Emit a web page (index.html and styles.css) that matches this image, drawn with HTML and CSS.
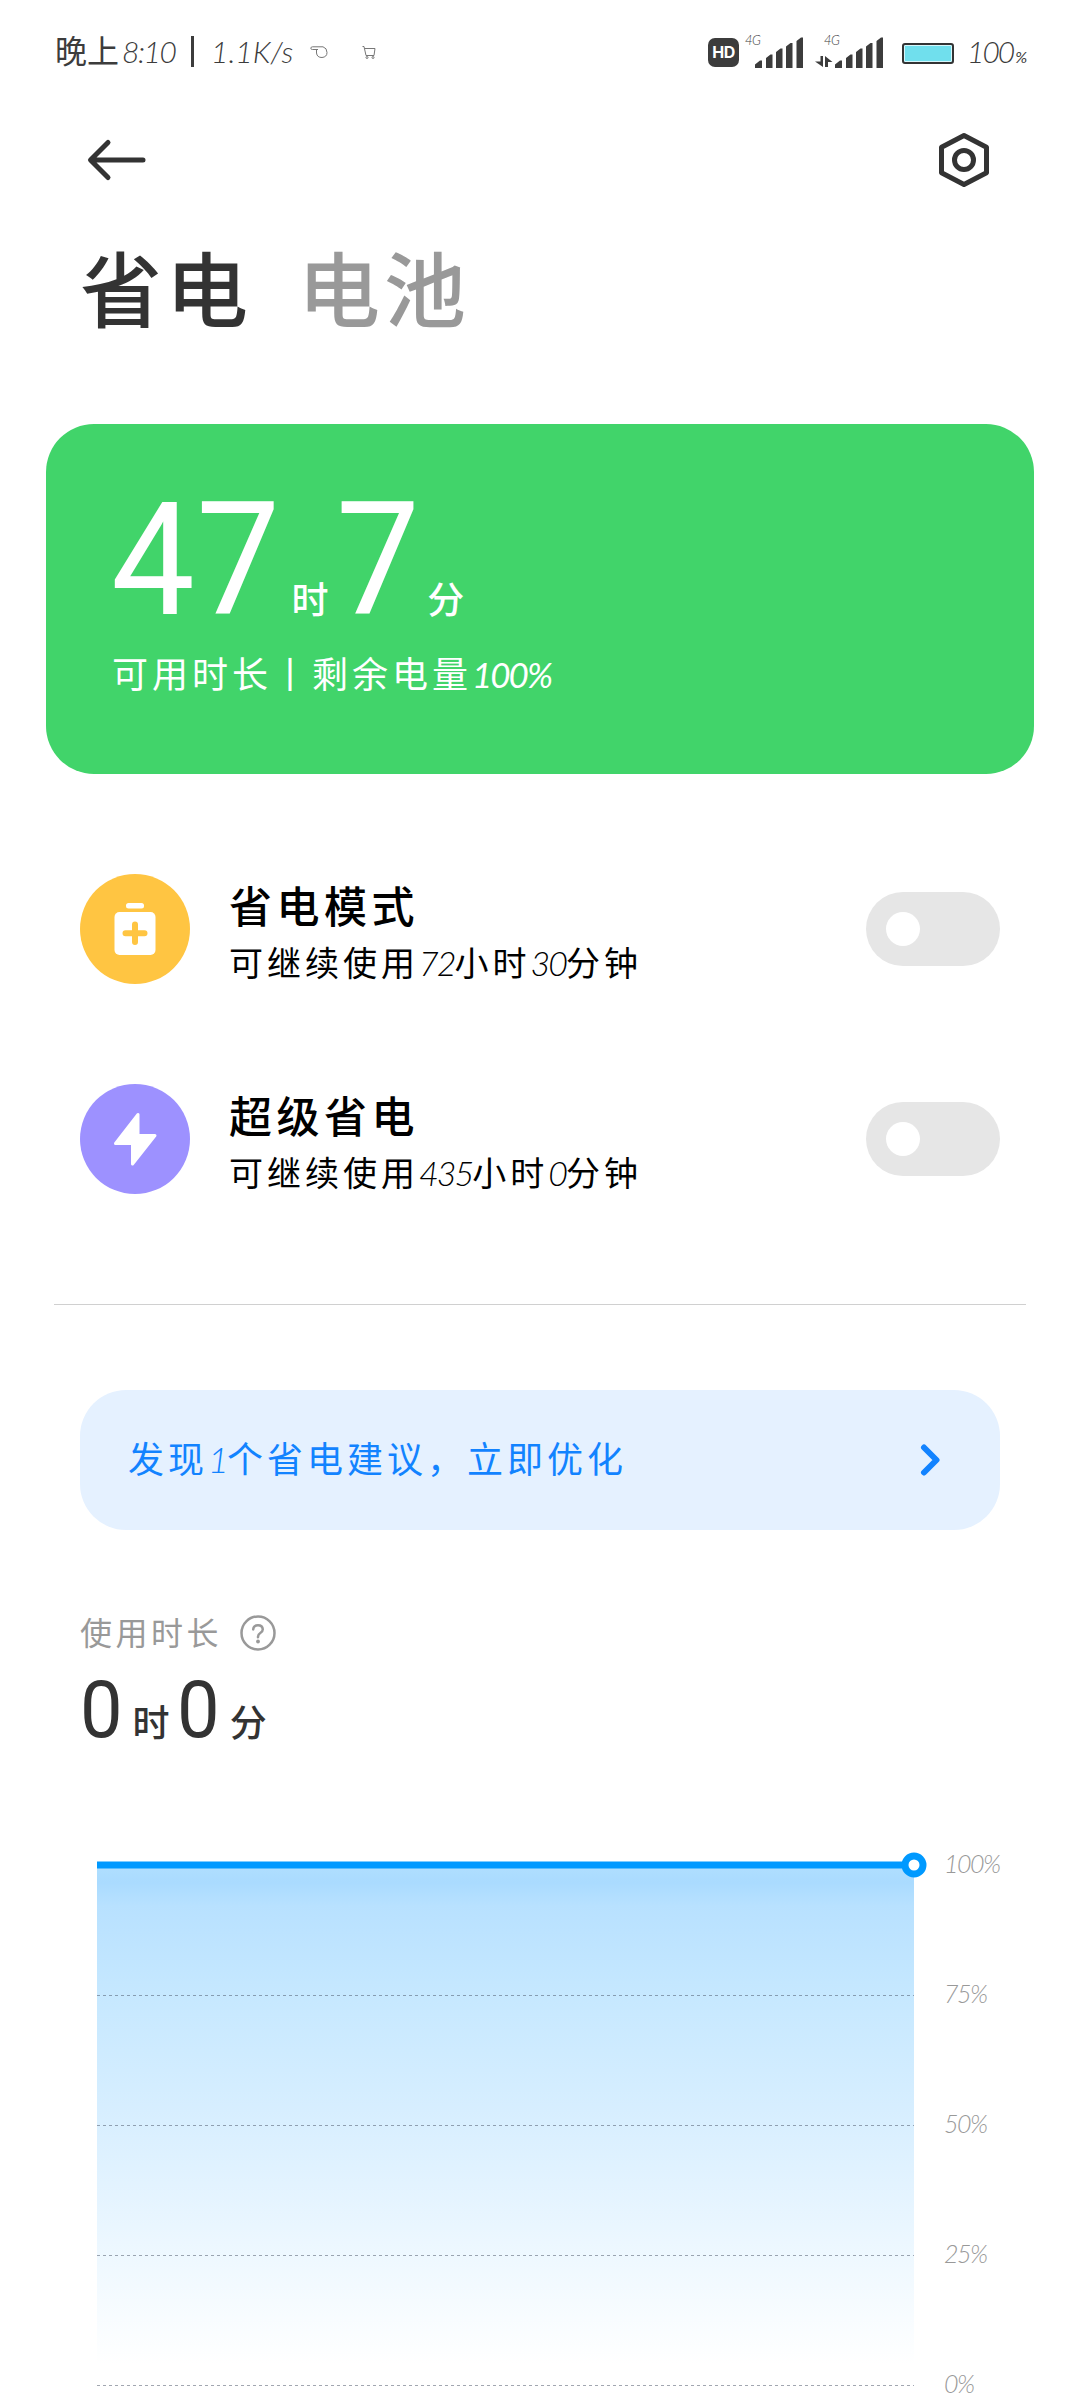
FILE: index.html
```html
<!DOCTYPE html>
<html lang="zh-CN">
<head>
<meta charset="utf-8">
<title>省电</title>
<link rel="stylesheet" href="styles.css">
</head>
<body>
<div class="screen">
  <header class="status">
    <div class="status-left">
      <span class="clock">晚上<span class="num">8:10</span></span>
      <span class="sep"></span>
      <span class="num speed">1.1K/s</span>
      <svg class="tray-hand" width="18" height="14" viewBox="0 0 18 14"><path d="M8 4.500H2.500Q.8 4.500.8 3.200T2.500 1.800H13Q17 3 17 7.500T12 12.500Q7 12.500 6.500 8V4.500" /></svg>
      <svg class="tray-cart" width="14" height="14" viewBox="0 0 14 14"><path d="M.5 1.500H2L4 10.500H12L13 3.500H2.800" /><circle cx="5" cy="12.500" r="1"/><circle cx="11" cy="12.500" r="1"/></svg>
    </div>
    <div class="status-right">
      <span class="hd">HD</span>
      <span class="signal first"><span class="net">4G</span>
        <svg width="48" height="31" viewBox="0 0 48 31"><path d="M0 31V27.500L5 23.500H7V31ZM11 31V21L15.500 17.500H17.500V31ZM21 31V15L25.500 11.500H27.500V31ZM31 31V9.500L35.500 6H37.500V31ZM41.500 31V4L46 .5H48V31Z"/></svg>
      </span>
      <span class="signal second"><span class="net">4G</span>
        <svg width="68" height="31" viewBox="0 0 68 31"><path d="M5.500 19H8V30L0 24.500H5.500ZM10 19 17.500 25H13V30H10Z"/><path transform="translate(20)" d="M0 31V27.500L5 23.500H7V31ZM11 31V21L15.500 17.500H17.500V31ZM21 31V15L25.500 11.500H27.500V31ZM31 31V9.500L35.500 6H37.500V31ZM41.500 31V4L46 .5H48V31Z"/></svg>
      </span>
      <span class="battery"></span>
      <span class="num level">100<small>%</small></span>
    </div>
  </header>

  <nav class="toolbar">
    <svg width="60" height="44" viewBox="0 0 60 44"><path d="M57 22H5M22 4.500 4.500 22 22 39.500"/></svg>
    <svg width="54" height="58" viewBox="0 0 54 58"><path d="M27 4.500 49.500 16.200V41.800L27 53.500 4.500 41.800V16.200Z"/><circle cx="27" cy="29" r="9.500"/></svg>
  </nav>

  <div class="tabs"><span class="tab active">省电</span><span class="tab">电池</span></div>

  <section class="summary">
    <div class="duration big"><span class="digits">47</span><span class="unit">时</span><span class="digits">7</span><span class="unit">分</span></div>
    <div class="caption">可用时长丨剩余电量<span class="num">100%</span></div>
  </section>

  <section class="modes">
    <div class="mode">
      <svg class="badge" width="110" height="110" viewBox="0 0 110 110"><circle cx="55" cy="55" r="55" fill="#ffc542"/><rect x="46" y="29" width="18" height="5.500" rx="2.500" fill="#fff"/><rect x="34.500" y="38" width="41" height="43" rx="5" fill="#fff"/><path d="M55 50.500V68M45.500 59.200H64.500" stroke="#ffc542" stroke-width="6" stroke-linecap="round"/></svg>
      <div class="mode-text">
        <div class="mode-title">省电模式</div>
        <div class="mode-sub">可继续使用<span class="num">72</span>小时<span class="num">30</span>分钟</div>
      </div>
      <span class="toggle"><span class="knob"></span></span>
    </div>
    <div class="mode">
      <svg class="badge" width="110" height="110" viewBox="0 0 110 110"><circle cx="55" cy="55" r="55" fill="#9d91ff"/><path d="M58 30.500V51.500H75L52.500 80V59.500H35.500Z" fill="#fff" stroke="#fff" stroke-width="3" stroke-linejoin="round"/></svg>
      <div class="mode-text">
        <div class="mode-title">超级省电</div>
        <div class="mode-sub">可继续使用<span class="num">435</span>小时<span class="num">0</span>分钟</div>
      </div>
      <span class="toggle"><span class="knob"></span></span>
    </div>
  </section>

  <hr class="divider">

  <section class="tip">
    <span class="tip-text">发现<span class="num">1</span>个省电建议，立即优化</span>
    <svg width="22" height="36" viewBox="0 0 22 36"><path d="M4 5.500 16.500 18 4 30.500"/></svg>
  </section>

  <section class="usage">
    <div class="usage-head"><span>使用时长</span>
      <svg width="36" height="36" viewBox="0 0 36 36"><circle cx="18" cy="18" r="16.500"/><path d="M13.200 14.500Q13.500 10.200 18 10.200T22.800 14.300Q22.800 16.500 20.300 18T18 22.300"/><circle class="dot" cx="18" cy="26.500" r="1.900"/></svg>
    </div>
    <div class="duration small"><span class="digits">0</span><span class="unit">时</span><span class="digits">0</span><span class="unit">分</span></div>
  </section>

  <section class="chart">
    <svg width="836" height="550" viewBox="0 0 836 550">
      <defs>
        <linearGradient id="fill" x1="0" y1="0" x2="0" y2="1">
          <stop offset="0" stop-color="#b0dfff"/><stop offset=".035" stop-color="#aadbff"/><stop offset=".08" stop-color="#b8e1ff"/><stop offset=".25" stop-color="#c6e8ff"/><stop offset=".5" stop-color="#d9efff"/><stop offset=".75" stop-color="#eef8ff"/><stop offset=".96" stop-color="#fff"/>
        </linearGradient>
      </defs>
      <rect x="0" y="14.500" width="817" height="521" fill="url(#fill)"/>
      <path class="grid" d="M0 145.500H817M0 275.500H817M0 405.500H817M0 535.500H817"/>
      <path class="line" d="M0 15H817"/>
      <circle class="marker" cx="817" cy="15" r="9"/>
    </svg>
    <div class="axis"><span class="num">100%</span><span class="num">75%</span><span class="num">50%</span><span class="num">25%</span><span class="num">0%</span></div>
  </section>
</div>
</body>
</html>
```
FILE: styles.css
```css
* { box-sizing: border-box; }
body {
  margin: 0;
  background: #fff;
  color: #333;
  font-family: "Noto Sans CJK SC", sans-serif;
}
.screen {
  width: 1080px;
  height: 2400px;
  overflow: hidden;
  display: flex;
  flex-direction: column;
}
svg { display: block; flex: none; fill: none; }
.num {
  font-family: Lato, "Noto Sans CJK SC", sans-serif;
  font-style: italic;
  font-weight: 300;
}

/* status bar */
.status {
  height: 104px;
  padding: 0 55px;
  display: flex;
  justify-content: space-between;
  color: #3c3c3c;
}
.status-left, .status-right { display: flex; align-items: center; height: 104px; }
.clock { font-size: 32px; line-height: 40px; white-space: nowrap; width: 121px; margin-top: -4px; }
.clock .num { font-size: 30px; letter-spacing: -1.5px; margin-left: 3px; }
.sep { width: 3px; height: 31px; background: #3c3c3c; margin: 0 17px 2px 15px; }
.speed { font-size: 30px; width: 80px; white-space: nowrap; letter-spacing: 0; margin-top: -2px; }
.status-left svg { stroke: #777; stroke-width: 1; }
.tray-hand { margin-left: 19px; }
.tray-cart { margin-left: 34px; }
.hd {
  width: 31px;
  height: 29px;
  border-radius: 7px;
  background: #3c3c3c;
  color: #fff;
  font: 700 16px/29px Inter, sans-serif;
  text-align: center;
  letter-spacing: -.5px;
}
.signal { position: relative; fill: #3c3c3c; }
.signal svg { fill: #3c3c3c; }
.first { margin-left: 16px; }
.second { margin-left: 12px; }
.net {
  position: absolute;
  left: -10px;
  top: -4px;
  font: italic 300 13px/14px Lato, sans-serif;
  letter-spacing: -.5px;
}
.second .net { left: 9px; }
.battery {
  width: 52px;
  height: 21px;
  margin: 2px 13px 0 19px;
  border: 2px solid #333;
  border-radius: 3px;
  background: #70dfed;
  box-shadow: inset 0 0 0 1px #d5f6fa;
}
.level { font-size: 30px; width: 58px; white-space: nowrap; letter-spacing: -2px; margin-top: -2px; }
.level small { font-size: 16px; font-weight: 400; margin-left: 2px; }

/* toolbar and tabs */
.toolbar {
  height: 112px;
  padding: 0 89px 0 86px;
  display: flex;
  justify-content: space-between;
  align-items: center;
}
.toolbar svg { stroke: #333; stroke-width: 5; stroke-linecap: round; stroke-linejoin: round; }
.tabs {
  height: 208px;
  padding: 10px 0 0 80px;
  display: flex;
  gap: 46px;
  font-size: 82px;
  line-height: 120px;
  letter-spacing: 4px;
}
.tab { color: #999; font-weight: 500; }
.tab.active { color: #333; }

/* remaining time card */
.summary {
  height: 350px;
  margin: 0 46px;
  padding: 58px 66px 0;
  border-radius: 48px;
  background: #41d46a;
  color: #fff;
}
.duration { display: flex; align-items: baseline; font-family: Roboto, sans-serif; }
.duration .unit { font-family: "Noto Sans CJK SC", sans-serif; font-weight: 500; line-height: 1; }
.big { height: 160px; line-height: 156px; }
.big .digits {
  font-size: 157px;
  letter-spacing: 1.5px;
  margin: 0 -9px 0 -1px;
  transform: scaleX(.95);
  transform-origin: left;
}
.big .unit { font-size: 37px; margin: 0 9px 0 10px; }
.caption { font-size: 36px; line-height: 60px; letter-spacing: 4px; }
.caption .num { letter-spacing: -2px; font-size: 35px; font-weight: 400; }

/* power modes */
.modes { padding: 100px 80px 0; height: 530px; }
.mode { display: flex; height: 110px; margin-bottom: 100px; align-items: center; }
.mode-text { flex: 1; margin-left: 39px; color: #000; }
.mode-title { font-size: 43px; line-height: 62px; letter-spacing: 4.5px; font-weight: 500; }
.mode-sub { font-size: 34px; line-height: 50px; letter-spacing: 4px; position: relative; top: 2px; }
.mode-sub .num { letter-spacing: -2px; }
.toggle { width: 134px; height: 74px; border-radius: 37px; background: #e6e6e6; padding: 20px; }
.knob { display: block; width: 34px; height: 34px; border-radius: 50%; background: #fff; }
.divider { width: 972px; height: 1px; border: 0; margin: 0 auto; background: #d0d0d0; flex: none; }

/* suggestion */
.tip {
  height: 140px;
  margin: 85px 80px 0;
  padding: 0 58px 0 48px;
  border-radius: 46px;
  background: #e5f1ff;
  color: #1283ff;
  display: flex;
  justify-content: space-between;
  align-items: center;
}
.tip-text { font-size: 36px; letter-spacing: 4px; line-height: 54px; margin-top: -4px; }
.tip-text .num { letter-spacing: -2px; }
.tip svg { stroke: #1283ff; stroke-width: 6; stroke-linecap: round; stroke-linejoin: round; }

/* usage time */
.usage { height: 320px; padding: 78px 80px 0; }
.usage-head { display: flex; align-items: center; height: 50px; font-size: 32px; letter-spacing: 3.500px; color: #999; }
.usage-head span { width: 160px; margin-top: -4px; }
.usage-head svg { stroke: #999; stroke-width: 2.5; stroke-linecap: round; }
.usage-head .dot { fill: #999; stroke: none; }
.small { height: 100px; line-height: 104px; }
.small .digits {
  font-size: 79px;
  letter-spacing: -2px;
  transform: scaleX(.96);
  transform-origin: left;
}
.small .unit { font-size: 37px; margin: 0 8px 0 10px; }

/* battery level chart */
.chart { display: flex; padding-left: 97px; height: 550px; }
.chart > svg { flex: none; }
.grid { stroke: rgba(70, 80, 100, .5); stroke-width: 1; stroke-dasharray: 3 3; }
.line { stroke: #0099ff; stroke-width: 7; }
.marker { fill: #fff; stroke: #0099ff; stroke-width: 7; }
.axis { margin-left: 11px; display: flex; flex-direction: column; color: #999; font-size: 25px; letter-spacing: -1.5px; }
.axis .num { height: 130px; line-height: 27px; flex: none; }
```
